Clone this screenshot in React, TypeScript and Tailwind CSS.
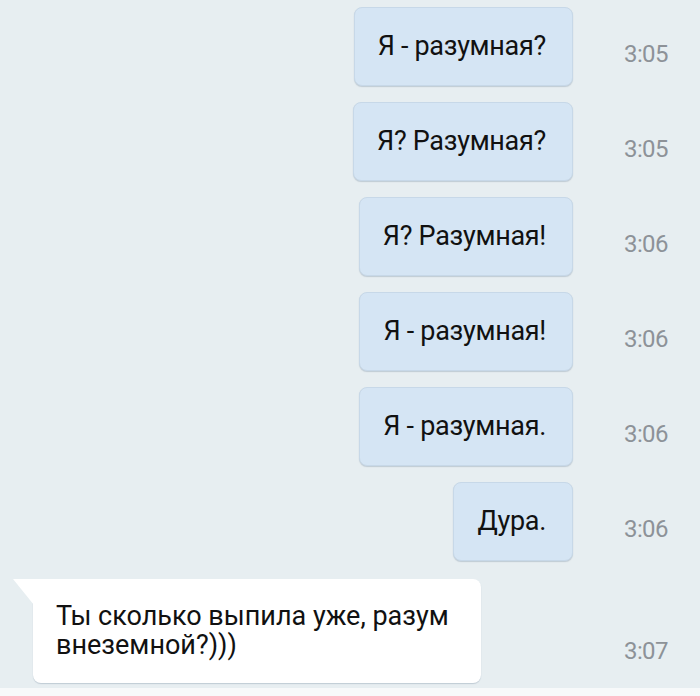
const outgoing = [
  { text: 'Я - разумная?', time: '3:05' },
  { text: 'Я? Разумная?', time: '3:05' },
  { text: 'Я? Разумная!', time: '3:06' },
  { text: 'Я - разумная!', time: '3:06' },
  { text: 'Я - разумная.', time: '3:06' },
  { text: 'Дура.', time: '3:06' },
];

function Time({ value }: { value: string }) {
  return (
    <div className="w-[127px] shrink-0 self-end pb-[19px] pl-[51px] text-[24px] leading-[26px] tracking-[-0.6px] text-[#8d9298]">
      {value}
    </div>
  );
}

export default function App() {
  return (
    <div
      className="flex h-[696px] w-[700px] flex-col overflow-hidden bg-[#e7eef1]"
      style={{ fontFamily: 'Roboto, "Noto Sans", sans-serif' }}
    >
      <div className="flex flex-1 flex-col gap-[16px] pt-[7px]">
        {outgoing.map((m, i) => (
          <div key={i} className="flex justify-end">
            <div className="rounded-[8px] border border-[#c7d8e8] bg-[#d5e5f4] py-[23px] pl-[23px] pr-[26px] text-[27px] leading-[31px] tracking-[-0.3px] text-[#111] shadow-[0_1px_1px_rgba(120,140,160,0.35)]">
              {m.text}
            </div>
            <Time value={m.time} />
          </div>
        ))}

        <div className="flex justify-between pl-[33px] pt-[2px]">
          <div className="relative w-[448px] rounded-[8px] rounded-tl-none bg-white px-[23px] pb-[23px] pt-[23px] text-[27px] leading-[29px] text-[#111] shadow-[0_1px_1px_rgba(120,140,160,0.35)]">
            <svg className="absolute left-[-20px] top-0" width="21" height="26" viewBox="0 0 21 26">
              <path d="M0 0 H21 V26 Z" fill="#ffffff" />
            </svg>
            Ты сколько выпила уже, разум
            <br />
            внеземной?)))
          </div>
          <Time value="3:07" />
        </div>
      </div>
      <div className="h-[8px] bg-[#f7f9fa]" />
    </div>
  );
}
